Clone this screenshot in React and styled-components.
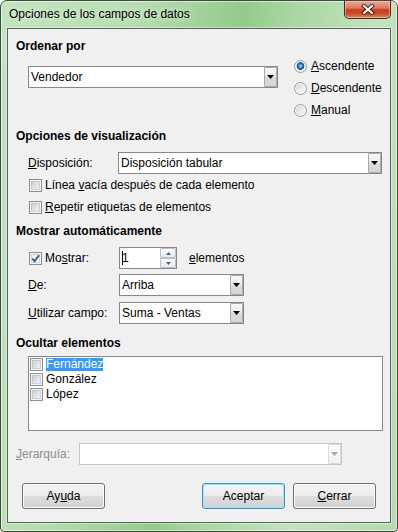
import React from "react"
import styled, { createGlobalStyle } from "styled-components"

const GlobalStyle = createGlobalStyle`
  html, body {
    margin: 0;
    padding: 0;
    background: #ffffff;
  }
  * {
    box-sizing: border-box;
  }
`

const Window = styled.div`
  width: 398px;
  height: 532px;
  display: flex;
  flex-direction: column;
  padding: 0 6px 8px;
  border: 1px solid #3d4b3e;
  border-radius: 7px 7px 4px 4px;
  background: linear-gradient(
    100deg,
    #c3e4be 0%,
    #b6ddb0 28%,
    #93cb8b 50%,
    #a9d6a2 60%,
    #c2e3bd 78%,
    #b4dbae 100%
  );
  box-shadow: inset 0 0 0 1px rgba(255, 255, 255, 0.55);
  font-family: "Liberation Sans", Arial, sans-serif;
  font-size: 12px;
  line-height: 15px;
  color: #000000;
`

const TitleBar = styled.div`
  height: 27px;
  flex: none;
  display: flex;
  align-items: center;
  justify-content: space-between;
  padding-left: 2px;
`

const Title = styled.span`
  text-shadow: 0 0 6px rgba(255, 255, 255, 0.9);
`

const CloseButton = styled.div`
  align-self: flex-start;
  width: 47px;
  height: 18px;
  display: flex;
  align-items: center;
  justify-content: center;
  border: 1px solid #5b2418;
  border-top: none;
  border-radius: 0 0 5px 5px;
  background: linear-gradient(
    #eaa898 0%,
    #de7c63 40%,
    #c8401f 52%,
    #cb4a2a 75%,
    #e58c62 100%
  );
  box-shadow: inset 0 0 0 1px rgba(255, 220, 200, 0.45);
`

const Client = styled.div`
  flex: 1;
  display: flex;
  flex-direction: column;
  padding: 10px 0 0 8px;
  background: #f0f0f0;
  border: 1px solid #55635a;
  box-shadow: 0 0 0 1px rgba(255, 255, 255, 0.45);
`

const Heading = styled.div`
  font-weight: bold;
  height: 15px;
  margin-top: ${p => p.$top || 0}px;
`

const Row = styled.div`
  display: flex;
  align-items: center;
  flex: none;
  height: ${p => p.$h || 22}px;
  margin-top: ${p => p.$top || 0}px;
  padding-left: ${p => (p.$indent === undefined ? 12 : p.$indent)}px;
`

const SortRow = styled.div`
  display: flex;
  align-items: flex-start;
  margin-top: 1px;
  padding-left: 12px;
`

const SortCombo = styled.div`
  margin-top: 11px;
`

const RadioGroup = styled.div`
  display: flex;
  flex-direction: column;
  margin-left: 16px;
`

const RadioRow = styled.label`
  height: 22px;
  display: flex;
  align-items: center;
  gap: 4px;
`

const Radio = styled.span`
  width: 13px;
  height: 13px;
  flex: none;
  border-radius: 50%;
  border: 1px solid #989a9c;
  background: ${p =>
    p.$checked
      ? "radial-gradient(circle at 50% 45%, #c6ecff 0px, #4aa3e6 1.3px, #1f6cbc 2.6px, #174e92 3.6px, #eef0f2 4.2px, #fafafa 100%)"
      : "linear-gradient(135deg, #cfd1d3 0%, #e6e7e8 45%, #fdfdfd 100%)"};
  box-shadow: inset 0 0 0 1px #f8f8f8;
`

const FieldLabel = styled.span`
  width: ${p => p.$w}px;
  flex: none;
  white-space: nowrap;
  color: ${p => (p.$disabled ? "#8d8d8d" : "#000000")};
`

const Key = styled.span`
  text-decoration: underline;
  text-underline-offset: 1px;
`

const ComboField = styled.div`
  width: ${p => p.$w}px;
  height: 22px;
  flex: none;
  display: flex;
  align-items: stretch;
  justify-content: space-between;
  background: #ffffff;
  border: 1px solid ${p => (p.$disabled ? "#c3c6c9" : "#85878a")};
`

const ComboText = styled.span`
  align-self: center;
  padding-left: 2px;
  white-space: nowrap;
`

const DropButton = styled.span`
  width: 13px;
  flex: none;
  display: flex;
  align-items: center;
  justify-content: center;
  border: 1px solid ${p => (p.$disabled ? "#dadbdc" : "#a7a9ab")};
  border-radius: 1px;
  background: ${p =>
    p.$disabled
      ? "linear-gradient(#fbfbfb, #f1f1f1)"
      : "linear-gradient(#f7f7f7 0%, #ececec 50%, #dcdcdc 51%, #d6d6d6 100%)"};
`

const CheckRow = styled.label`
  display: flex;
  align-items: center;
  gap: 3px;
  margin-left: 1px;
  width: ${p => (p.$w ? `${p.$w}px` : "auto")};
  flex: none;
`

const CheckBox = styled.span`
  width: 13px;
  height: 13px;
  flex: none;
  display: flex;
  align-items: center;
  justify-content: center;
  border: 1px solid #8e8f8f;
  background: ${p =>
    p.$checked
      ? "linear-gradient(135deg, #e6e8ea 0%, #f5f6f7 60%, #ffffff 100%)"
      : "linear-gradient(135deg, #c4c7cc 0%, #e0e2e4 50%, #f5f5f5 100%)"};
  box-shadow: inset 0 0 0 1px #f4f4f4, inset 0 0 0 2px rgba(178, 183, 190, 0.5);
`

const SpinField = styled.div`
  width: 58px;
  height: 22px;
  flex: none;
  display: flex;
  align-items: stretch;
  justify-content: space-between;
  background: #ffffff;
  border: 1px solid #85878a;
  margin-left: 1px;
`

const SpinText = styled.span`
  align-self: center;
  display: flex;
  align-items: center;
  padding-left: 2px;
`

const Caret = styled.span`
  width: 1px;
  height: 14px;
  background: #000000;
  margin-right: -1px;
`

const SpinButtons = styled.span`
  width: 16px;
  display: flex;
  flex-direction: column;
`

const SpinHalf = styled.span`
  flex: 1;
  display: flex;
  align-items: center;
  justify-content: center;
  border: 1px solid #bcc0c5;
  border-radius: 1px;
  background: linear-gradient(#f9fafb, #e6e9ed);
`

const Trailing = styled.span`
  margin-left: 12px;
`

const ListBox = styled.div`
  width: 355px;
  height: 75px;
  flex: none;
  margin: 5px 0 0 12px;
  padding: 0 0 0 1px;
  background: #ffffff;
  border: 1px solid #828790;
`

const ListItem = styled.div`
  height: 15px;
  display: flex;
  align-items: center;
  gap: 3px;
`

const ItemText = styled.span`
  line-height: 13px;
  height: 13px;
  background: ${p => (p.$selected ? "#3399ff" : "transparent")};
  color: ${p => (p.$selected ? "#ffffff" : "#000000")};
`

const ButtonRow = styled.div`
  display: flex;
  align-items: center;
  margin-top: 18px;
  padding: 0 14px 0 6px;
  gap: 8px;
`

const Spacer = styled.div`
  flex: 1;
`

const Button = styled.button`
  width: 83px;
  height: 26px;
  flex: none;
  padding: 0;
  font: inherit;
  color: #000000;
  border: 1px solid ${p => (p.$default ? "#3c8fd0" : "#707070")};
  border-radius: 3px;
  background: linear-gradient(#f3f3f3 0%, #ececec 48%, #dedede 50%, #d1d1d1 100%);
  box-shadow: inset 0 0 0 1px ${p => (p.$default ? "#9fe3fa" : "#fbfbfb")};
`

const Arrow = ({ up, color = "#000000", w = 7, h = 4 }) => (
  <svg width={w} height={h} viewBox={`0 0 ${w} ${h}`}>
    <polygon
      points={up ? `0,${h} ${w},${h} ${w / 2},0` : `0,0 ${w},0 ${w / 2},${h}`}
      fill={color}
    />
  </svg>
)

const CloseGlyph = () => (
  <svg width="14" height="11" viewBox="0 0 14 11">
    <path d="M3 2 L11 9 M11 2 L3 9" stroke="#3a1a14" strokeWidth="4" strokeLinecap="square" />
    <path d="M3 2 L11 9 M11 2 L3 9" stroke="#ffffff" strokeWidth="2.2" strokeLinecap="square" />
  </svg>
)

const CheckGlyph = () => (
  <svg width="9" height="9" viewBox="0 0 9 9">
    <path d="M1.2 4.6 L3.6 7.2 L8 1.2" fill="none" stroke="#3b5a98" strokeWidth="1.9" />
  </svg>
)

const Combo = ({ width, children, disabled }) => (
  <ComboField $w={width} $disabled={disabled}>
    <ComboText>{children}</ComboText>
    <DropButton $disabled={disabled}>
      <Arrow color={disabled ? "#a8a8a8" : "#000000"} />
    </DropButton>
  </ComboField>
)

const Check = ({ checked }) => (
  <CheckBox $checked={checked}>{checked && <CheckGlyph />}</CheckBox>
)

const App = () => {
  return (
    <>
      <GlobalStyle />
      <Window>
        <TitleBar>
          <Title>Opciones de los campos de datos</Title>
          <CloseButton>
            <CloseGlyph />
          </CloseButton>
        </TitleBar>

        <Client>
          <Heading>Ordenar por</Heading>
          <SortRow>
            <SortCombo>
              <Combo width={250}>Vendedor</Combo>
            </SortCombo>
            <RadioGroup>
              <RadioRow>
                <Radio $checked />
                <span>
                  <Key>A</Key>scendente
                </span>
              </RadioRow>
              <RadioRow>
                <Radio />
                <span>
                  <Key>D</Key>escendente
                </span>
              </RadioRow>
              <RadioRow>
                <Radio />
                <span>
                  <Key>M</Key>anual
                </span>
              </RadioRow>
            </RadioGroup>
          </SortRow>

          <Heading $top={8}>Opciones de visualización</Heading>
          <Row $top={8}>
            <FieldLabel $w={90}>
              <Key>D</Key>isposición:
            </FieldLabel>
            <Combo width={264}>Disposición tabular</Combo>
          </Row>
          <Row>
            <CheckRow>
              <Check />
              <span>
                Línea <Key>v</Key>acía después de cada elemento
              </span>
            </CheckRow>
          </Row>
          <Row>
            <CheckRow>
              <Check />
              <span>
                <Key>R</Key>epetir etiquetas de elementos
              </span>
            </CheckRow>
          </Row>

          <Heading $top={6}>Mostrar automáticamente</Heading>
          <Row $top={8}>
            <CheckRow $w={89}>
              <Check checked />
              <span>
                Mo<Key>s</Key>trar:
              </span>
            </CheckRow>
            <SpinField>
              <SpinText>
                <Caret />1
              </SpinText>
              <SpinButtons>
                <SpinHalf>
                  <Arrow up w={5} h={3} color="#4c5f7f" />
                </SpinHalf>
                <SpinHalf>
                  <Arrow w={5} h={3} color="#4c5f7f" />
                </SpinHalf>
              </SpinButtons>
            </SpinField>
            <Trailing>
              <Key>e</Key>lementos
            </Trailing>
          </Row>
          <Row $top={5}>
            <FieldLabel $w={91}>
              <Key>D</Key>e:
            </FieldLabel>
            <Combo width={125}>Arriba</Combo>
          </Row>
          <Row $top={6}>
            <FieldLabel $w={91}>
              <Key>U</Key>tilizar campo:
            </FieldLabel>
            <Combo width={125}>Suma - Ventas</Combo>
          </Row>

          <Heading $top={12}>Ocultar elementos</Heading>
          <ListBox>
            <ListItem>
              <Check />
              <ItemText $selected>Fernández</ItemText>
            </ListItem>
            <ListItem>
              <Check />
              <ItemText>González</ItemText>
            </ListItem>
            <ListItem>
              <Check />
              <ItemText>López</ItemText>
            </ListItem>
          </ListBox>

          <Row $top={12} $indent={0}>
            <FieldLabel $w={63} $disabled>
              <Key>J</Key>erarquía:
            </FieldLabel>
            <Combo width={263} disabled />
          </Row>

          <ButtonRow>
            <Button>
              Ay<Key>u</Key>da
            </Button>
            <Spacer />
            <Button $default>Aceptar</Button>
            <Button>
              <Key>C</Key>errar
            </Button>
          </ButtonRow>
        </Client>
      </Window>
    </>
  )
}

export default App
